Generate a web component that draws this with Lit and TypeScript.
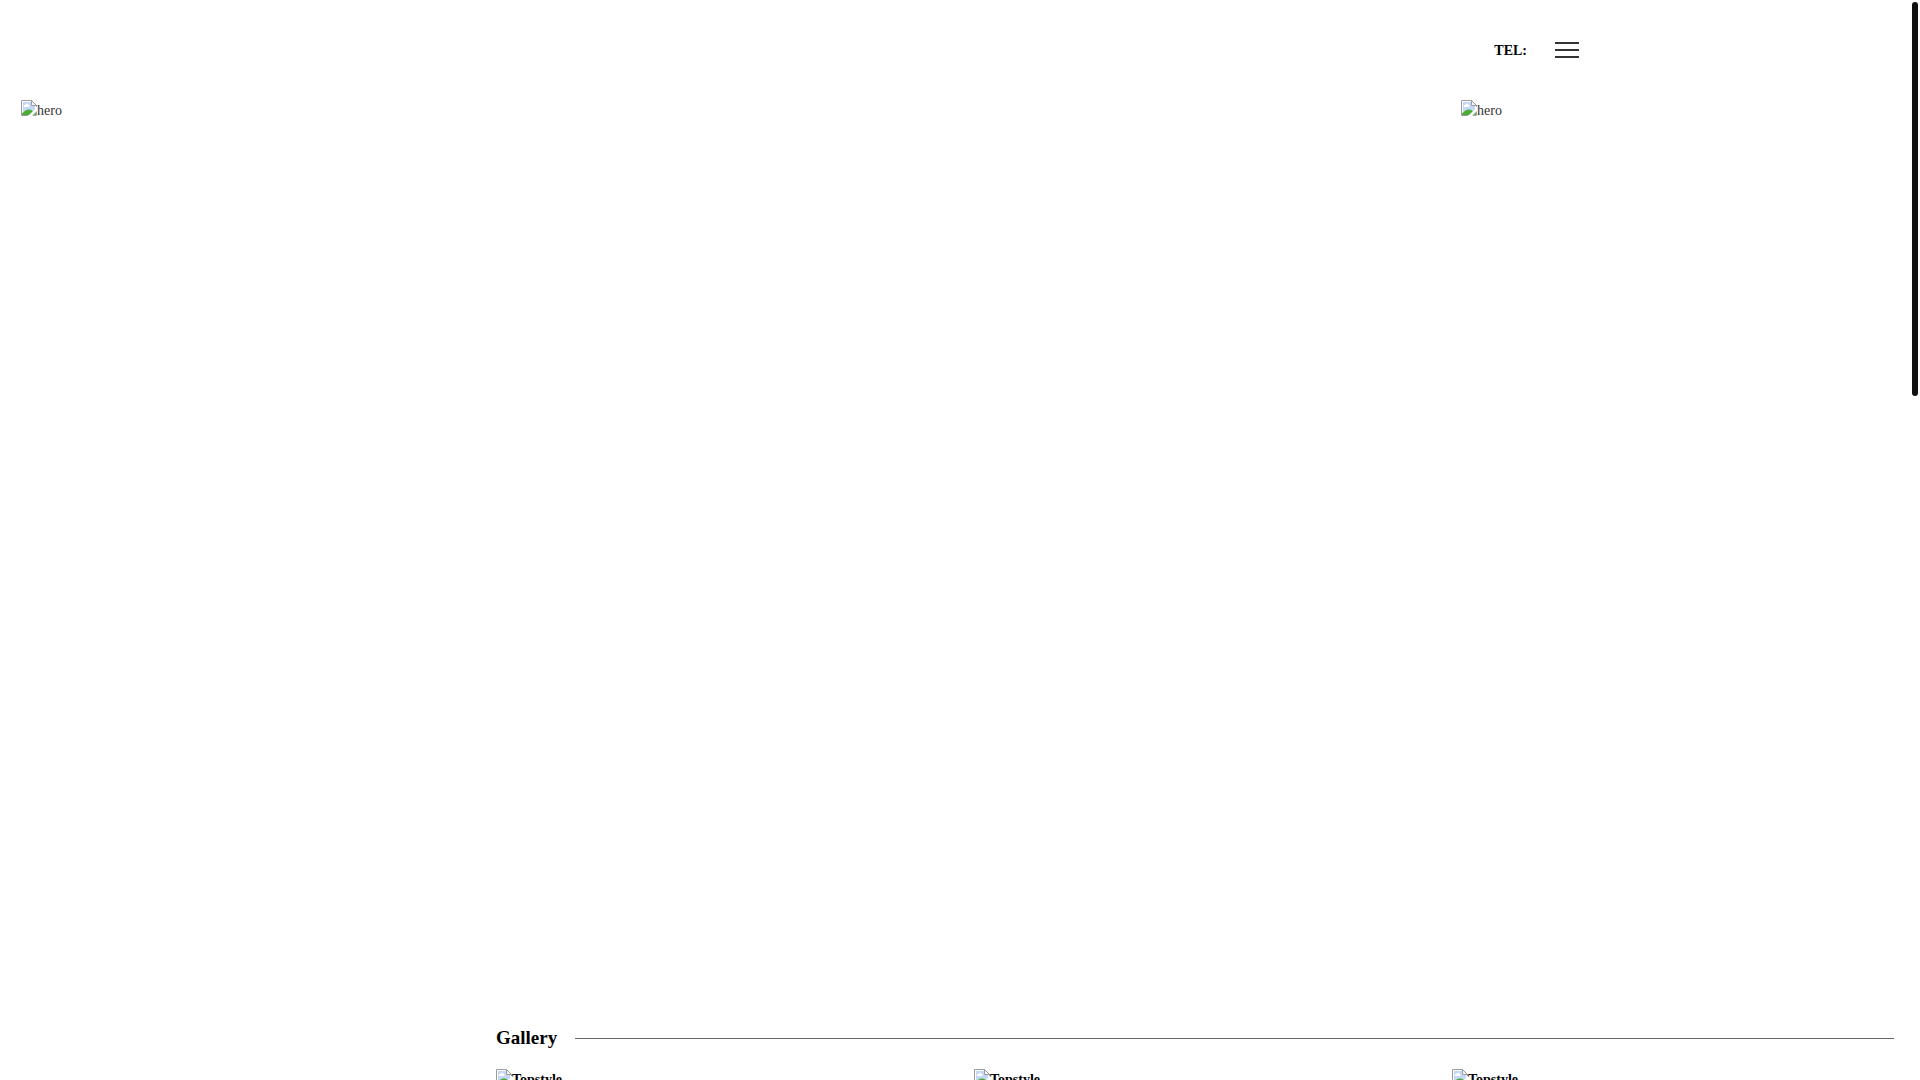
import { LitElement, html, css } from "lit";
import { customElement, property } from "lit/decorators.js";

/* Placeholder for a picture that is not available: page icon plus its label. */
@customElement("missing-picture")
class MissingPicture extends LitElement {
  @property() label = "";

  static styles = css`
    :host {
      display: flex;
      align-items: flex-start;
    }
    .icon {
      flex: none;
      width: 16px;
      height: 16px;
    }
    .label {
      line-height: 22px;
    }
  `;

  render() {
    return html`
      <svg class="icon" viewBox="0 0 16 16" aria-hidden="true">
        <path d="M0 0H11L16 5V16H0Z" fill="#fff" />
        <path d="M2 2H10V6H14V14H2Z" fill="#c3d7f7" />
        <path d="M3 7C2.500 5.500 3.600 4.700 4.600 4.900C5 3.300 7 3.400 7.300 4.800C8.400 4.700 8.800 6 8.200 7Z" fill="#fff" />
        <path d="M1 15V13.500C3 11.500 5 9.500 8 9.500C10 9.500 11.500 10.500 12.500 12L9 15Z" fill="#4bab36" />
        <path d="M16 7L7 16H11L16 11Z" fill="#fff" />
        <path d="M15 12V15H12Z" fill="#5eb34b" />
        <path d="M15.500 7V5.500L10.500 .5H.5V15.500H7" fill="none" stroke="#9b9b9b" />
        <path d="M10.500 .5V5.500H15.500Z" fill="#f3f5f8" stroke="#9b9b9b" />
        <path d="M11.500 15.500H15.500V11.500" fill="none" stroke="#a8a8a8" />
      </svg>
      <span class="label">${this.label}</span>
    `;
  }
}

@customElement("app-root")
class AppRoot extends LitElement {
  static styles = css`
    :host {
      display: block;
      position: relative;
      height: 100vh;
      overflow: hidden;
      background: #fff;
      color: #000;
      font-family: "Liberation Serif", serif;
      font-size: 14px;
      line-height: 22px;
    }
    .header {
      display: flex;
      align-items: center;
      justify-content: flex-end;
      gap: 28px;
      box-sizing: border-box;
      height: 100px;
      max-width: 1240px;
      margin: 0 auto;
    }
    .tel {
      padding-top: 2px;
      color: inherit;
      font-weight: 700;
      text-decoration: none;
    }
    .menu {
      display: flex;
      flex-direction: column;
      gap: 5px;
      width: 25px;
      padding: 0 1px 0 0;
      border: 0;
      background: none;
      cursor: pointer;
    }
    .bar {
      height: 2px;
      width: 100%;
      background: #333;
    }
    .hero {
      display: flex;
      overflow: hidden;
    }
    .slide {
      flex: 0 0 75%;
      box-sizing: border-box;
      aspect-ratio: 8 / 5;
      padding-left: 21px;
      color: #333;
    }
    .gallery {
      padding: 24px 26px 0 496px;
    }
    .heading {
      display: flex;
      align-items: center;
      gap: 18px;
      margin: 0 0 17px;
      font-size: 19px;
      line-height: 28px;
    }
    .rule {
      flex: 1;
      height: 1px;
      background: #666;
    }
    .grid {
      display: grid;
      grid-template-columns: repeat(3, 1fr);
      gap: 36px;
    }
    .item {
      color: inherit;
      font-weight: 700;
      text-decoration: none;
    }
    .scroll-thumb {
      position: absolute;
      top: 2px;
      right: 2px;
      width: 6px;
      height: 36.5%;
      border-radius: 3px;
      background: #111;
    }
  `;

  render() {
    return html`
      <header class="header">
        <a class="tel" href="tel:">TEL:</a>
        <button class="menu" aria-label="Menu">
          <span class="bar"></span>
          <span class="bar"></span>
          <span class="bar"></span>
        </button>
      </header>
      <main>
        <div class="hero">
          ${[0, 1].map(() => html`<missing-picture class="slide" label="hero"></missing-picture>`)}
        </div>
        <section class="gallery">
          <h2 class="heading">Gallery<span class="rule"></span></h2>
          <div class="grid">
            ${[0, 1, 2].map(
              () => html`<a class="item" href="#"><missing-picture label="Topstyle"></missing-picture></a>`
            )}
          </div>
        </section>
      </main>
      <div class="scroll-thumb"></div>
    `;
  }
}
